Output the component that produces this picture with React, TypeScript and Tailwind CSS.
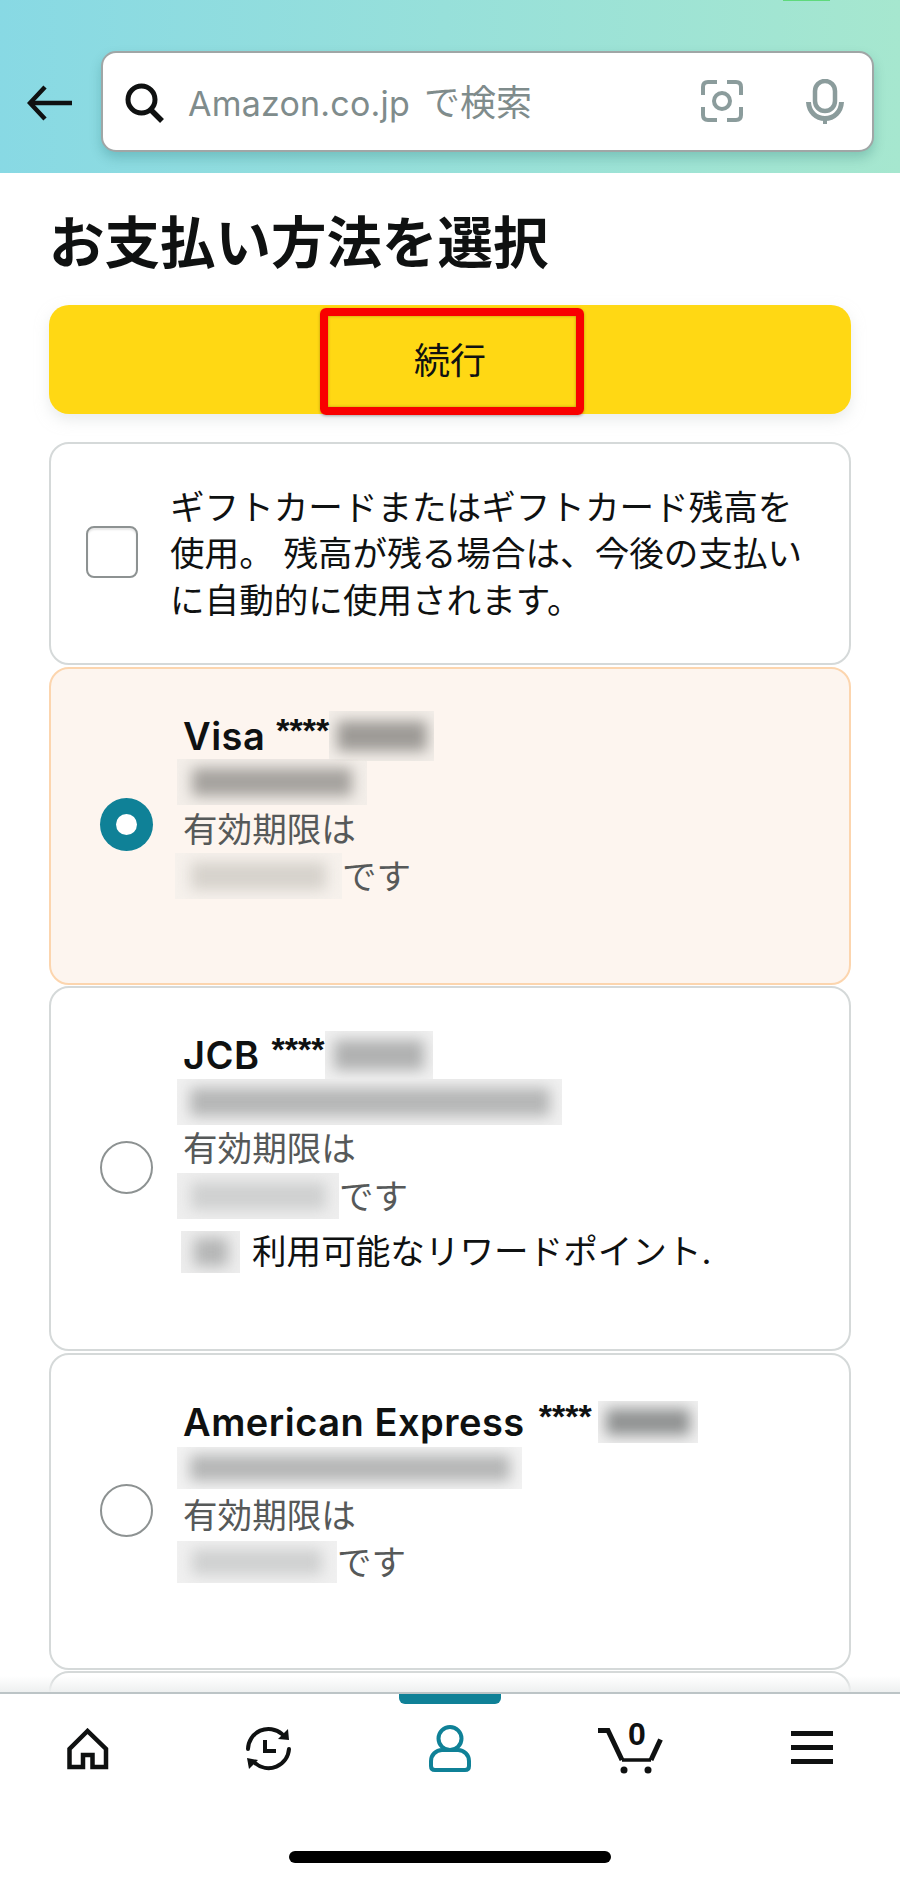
import React from "react";

function Blur({ outer, inner }: { outer: string; inner: string }) {
  return (
    <span className={"flex items-center justify-center overflow-hidden shrink-0 " + outer}>
      <span className={"block blur-[7px] " + inner} />
    </span>
  );
}

function Radio({ on }: { on?: boolean }) {
  if (on)
    return (
      <div className="w-[53px] h-[53px] rounded-full bg-[#0f8197] flex items-center justify-center shrink-0 ml-[49px] mr-[30px] -mt-[2px]">
        <div className="w-[21px] h-[21px] rounded-full bg-white" />
      </div>
    );
  return (
    <div className="w-[53px] h-[53px] rounded-full border-2 border-[#8d9292] bg-white shrink-0 ml-[49px] mr-[30px] -mt-[2px]" />
  );
}

function Title({ name, stars }: { name: string; stars: React.ReactNode }) {
  return (
    <div className="h-[46px] flex items-center text-[38px] font-semibold text-[#0f1111] leading-[46px] tracking-[0.5px]">
      <span>{name}</span>
      {stars}
    </div>
  );
}

function Stars({ cls }: { cls: string }) {
  return <span className={"font-['Liberation_Sans',sans-serif] font-bold text-[34px] tracking-normal leading-none -translate-y-[6px] " + cls}>****</span>;
}

function Expiry({ blur }: { blur: React.ReactNode }) {
  return (
    <>
      <div className="h-[47px] text-[34.6px] leading-[46px] text-[#565959]">有効期限は</div>
      <div className="h-[47px] flex items-center text-[34.6px] leading-[46px] text-[#565959]">
        {blur}
        <span>です</span>
      </div>
    </>
  );
}

export default function App() {
  return (
    <div className="w-[900px] h-[1880px] bg-white flex flex-col overflow-hidden relative font-['Inter','Noto_Sans_CJK_JP',sans-serif] text-[#0f1111]">
      <div className="absolute left-[783px] top-0 w-[47px] h-[1px] bg-[#5fd97c]" />
      {/* Header */}
      <header className="h-[173px] shrink-0 bg-gradient-to-r from-[#88d9e4] to-[#a6e7cf] flex items-center pl-[27px] pr-[26px] pt-[29px]">
        <svg width="45" height="36" viewBox="0 0 45 36" className="shrink-0 mr-[29px] mt-[3px]" fill="none" stroke="#0f1111" strokeWidth="4.5">
          <path d="M18 2 L3 18 L18 34" />
          <path d="M3 18 H45" />
        </svg>
        <div className="w-[773px] h-[101px] bg-white rounded-[15px] border-2 border-[#a0a6a6] shadow-[0_6px_12px_rgba(0,80,80,0.22)] flex items-center pl-[22px] pr-[28px]">
          <svg width="41" height="40" viewBox="0 0 41 40" className="shrink-0 mr-[22px] mt-[3px]" fill="none" stroke="#0f1111">
            <circle cx="16.5" cy="16.5" r="13.5" strokeWidth="5" />
            <path d="M25 26 L37 38" strokeWidth="5.5" />
          </svg>
          <span className="text-[34px] text-[#7f8c8c] tracking-[0.2px] flex-1 whitespace-nowrap mt-[3px]">Amazon.co.jp<span className="text-[36px] ml-[14px] tracking-normal">で検索</span></span>
          <svg width="42" height="42" viewBox="0 0 42 42" className="shrink-0 mr-[63px]" fill="none" stroke="#8b9c9c" strokeWidth="4">
            <path d="M2 15 V7 Q2 2 7 2 H16" />
            <path d="M26 2 H35 Q40 2 40 7 V15" />
            <path d="M2 27 V35 Q2 40 7 40 H16" />
            <path d="M26 40 H35 Q40 40 40 35 V27" />
            <circle cx="21" cy="21" r="8" />
          </svg>
          <svg width="38" height="45" viewBox="0 0 38 45" className="shrink-0" fill="none" stroke="#8b9c9c" strokeWidth="4.5">
            <rect x="9" y="2" width="20" height="30" rx="10" />
            <path d="M2.5 23 C3 33 10 39.5 19 39.5 C28 39.5 35 33 35.5 23" strokeWidth="5" />
            <path d="M19 39 V45" strokeWidth="4" />
          </svg>
        </div>
      </header>

      {/* Content */}
      <main className="flex-1 min-h-0 overflow-hidden px-[49px] relative">
        <h1 className="text-[55.5px] font-bold leading-[60px] mt-[40px] text-[#0f1111]">お支払い方法を選択</h1>
        <div className="relative mt-[32px] h-[109px] rounded-[20px] bg-[#ffd814] shadow-[0_6px_14px_rgba(213,217,217,0.5)] flex items-center justify-center text-[36px] text-[#0f1111] pt-[2px]">
          続行
          <div className="absolute left-[271px] top-[3px] w-[264px] h-[107px] border-[8px] border-[#f90000] rounded-[6px] shadow-[0_1px_3px_rgba(0,0,0,0.3),inset_0_0_3px_rgba(0,0,0,0.3)]" />
        </div>

        <div className="mt-[28px] flex flex-col gap-[1.5px]">
          <div className="h-[223px] rounded-[20px] border-2 border-[#d5d9d9] flex items-center">
            <div className="w-[52px] h-[52px] rounded-[8px] border-2 border-[#8d9292] shadow-[inset_0_2px_2px_rgba(0,0,0,0.1)] shrink-0 ml-[35px] mr-[32px] mb-[3px]" />
            <p className="text-[34.6px] leading-[46.5px] w-[650px] text-[#0f1111]">ギフトカードまたはギフトカード残高を<br />使用。 残高が残る場合は、今後の支払い<br />に自動的に使用されます。</p>
          </div>

          <div className="h-[318px] rounded-[20px] border-2 border-[#fcd5ae] bg-[#fdf5ef] flex items-center">
            <Radio on />
            <div className="self-start pt-[44px]">
              <Title name="Visa" stars={<><Stars cls="ml-[11px]" /><Blur outer="w-[105px] h-[50px] bg-[#f3eee9]" inner="w-[90px] h-[30px] bg-[#9d9a96]" /></>} />
              <div className="h-[47px] flex items-center -ml-[6px]"><Blur outer="w-[190px] h-[46px] bg-[#f3eee9]" inner="w-[160px] h-[28px] bg-[#a5a29e]" /></div>
              <Expiry blur={<Blur outer="w-[167px] h-[46px] -ml-[8px] bg-[#f6f1ec]" inner="w-[135px] h-[28px] bg-[#d6d2cc]" />} />
            </div>
          </div>

          <div className="h-[365px] rounded-[20px] border-2 border-[#d5d9d9] flex items-center">
            <Radio />
            <div className="self-start pt-[44px]">
              <Title name="JCB" stars={<><Stars cls="ml-[12px]" /><Blur outer="w-[108px] h-[48px] bg-[#f0f0f0]" inner="w-[90px] h-[30px] bg-[#b0b1b1]" /></>} />
              <div className="h-[47px] flex items-center -ml-[6px]"><Blur outer="w-[385px] h-[46px] bg-[#f0f0f0]" inner="w-[360px] h-[28px] bg-[#b5b6b6]" /></div>
              <Expiry blur={<Blur outer="w-[162px] h-[46px] -ml-[6px] bg-[#eeeeee]" inner="w-[135px] h-[28px] bg-[#cfd0d0]" />} />
              <div className="h-[56px] flex items-center text-[34.6px] text-[#0f1111] -ml-[2px] mt-[5px]">
                <Blur outer="w-[59px] h-[42px] mr-[12px] bg-[#ededed]" inner="w-[34px] h-[28px] bg-[#b5b6b6]" />
                <span>利用可能なリワードポイント.</span>
              </div>
            </div>
          </div>

          <div className="h-[317px] rounded-[20px] border-2 border-[#d5d9d9] flex items-center">
            <Radio />
            <div className="self-start pt-[44px]">
              <Title name="American Express" stars={<><Stars cls="ml-[14px]" /><Blur outer="w-[100px] h-[42px] ml-[6px] bg-[#f0f0f0]" inner="w-[84px] h-[26px] bg-[#909292]" /></>} />
              <div className="h-[47px] flex items-center -ml-[6px]"><Blur outer="w-[345px] h-[42px] bg-[#f2f2f2]" inner="w-[320px] h-[26px] bg-[#b5b6b6]" /></div>
              <Expiry blur={<Blur outer="w-[160px] h-[42px] -ml-[6px] bg-[#f0f0f0]" inner="w-[130px] h-[26px] bg-[#cfd0d0]" />} />
            </div>
          </div>

          <div className="h-[100px] rounded-[20px] border-2 border-[#d5d9d9]" />
        </div>
        <div className="absolute left-0 right-0 bottom-0 h-[16px] bg-gradient-to-b from-transparent to-[#eef0f0]" />
      </main>

      {/* Bottom nav */}
      <nav className="h-[188px] shrink-0 bg-white border-t-2 border-[#bcc4c6] flex flex-col items-center relative">
        <div className="absolute left-[399px] top-0 w-[102px] h-[10px] rounded-b-[6px] bg-[#0f8197]" />
        <div className="w-full grid grid-cols-5 h-[157px] pt-[26px]">
          <div className="flex justify-center items-start pt-[8px] pr-[4px]">
            <svg width="42" height="42" viewBox="0 0 42 42" fill="none" stroke="#0f1111" strokeWidth="4.5">
              <path d="M20.5 3 L2.5 21 V39 H16 V27 H25.5 V39 H39 V21 Z" />
            </svg>
          </div>
          <div className="flex justify-center items-start pt-[5px] pr-[4px]">
            <svg width="47" height="47" viewBox="0 0 47 47" fill="none" stroke="#0f1111" strokeWidth="4" strokeLinecap="round">
              <path d="M3 24 A20.5 20.5 0 0 1 37 9" />
              <path d="M44 24 A20.5 20.5 0 0 1 10 38" />
              <path d="M43 4 L44 15 L33 14 Z" fill="#0f1111" stroke="none" />
              <path d="M2 33 L13 35 L4 44 Z" fill="#0f1111" stroke="none" />
              <path d="M20 15 V26 H31" strokeLinecap="butt" />
            </svg>
          </div>
          <div className="flex justify-center items-start pt-[5px]">
            <svg width="42" height="47" viewBox="0 0 42 47" fill="none" stroke="#0f8197" strokeWidth="4">
              <circle cx="21" cy="13.5" r="11.5" />
              <path d="M2 41 V36 A11 11 0 0 1 13 25 H29 A11 11 0 0 1 40 36 V41 Q40 45 36 45 H6 Q2 45 2 41 Z" />
            </svg>
          </div>
          <div className="flex justify-center items-start relative">
            <svg width="66" height="53" viewBox="0 0 66 53" className="mt-[2px] ml-[1px]" fill="none" stroke="#0f1111" strokeWidth="5">
              <path d="M0 8.5 H10 L24 38" />
              <path d="M24 38 H53" strokeWidth="3.5" />
              <path d="M53 38 L62.5 17.5" />
              <circle cx="26" cy="48" r="3.5" fill="#0f1111" stroke="none" />
              <circle cx="50" cy="48" r="3.5" fill="#0f1111" stroke="none" />
            </svg>
            <span className="absolute left-[88px] -top-[4px] text-[32px] font-bold leading-[36px] font-['Liberation_Sans',sans-serif]">0</span>
          </div>
          <div className="flex justify-center items-start pt-[11px] pl-[4px]">
            <div className="w-[42px] flex flex-col gap-[9px]">
              <div className="h-[5px] bg-[#0f1111]" />
              <div className="h-[5px] bg-[#0f1111]" />
              <div className="h-[5px] bg-[#0f1111]" />
            </div>
          </div>
        </div>
        <div className="w-[322px] h-[12px] rounded-full bg-black" />
      </nav>
    </div>
  );
}
